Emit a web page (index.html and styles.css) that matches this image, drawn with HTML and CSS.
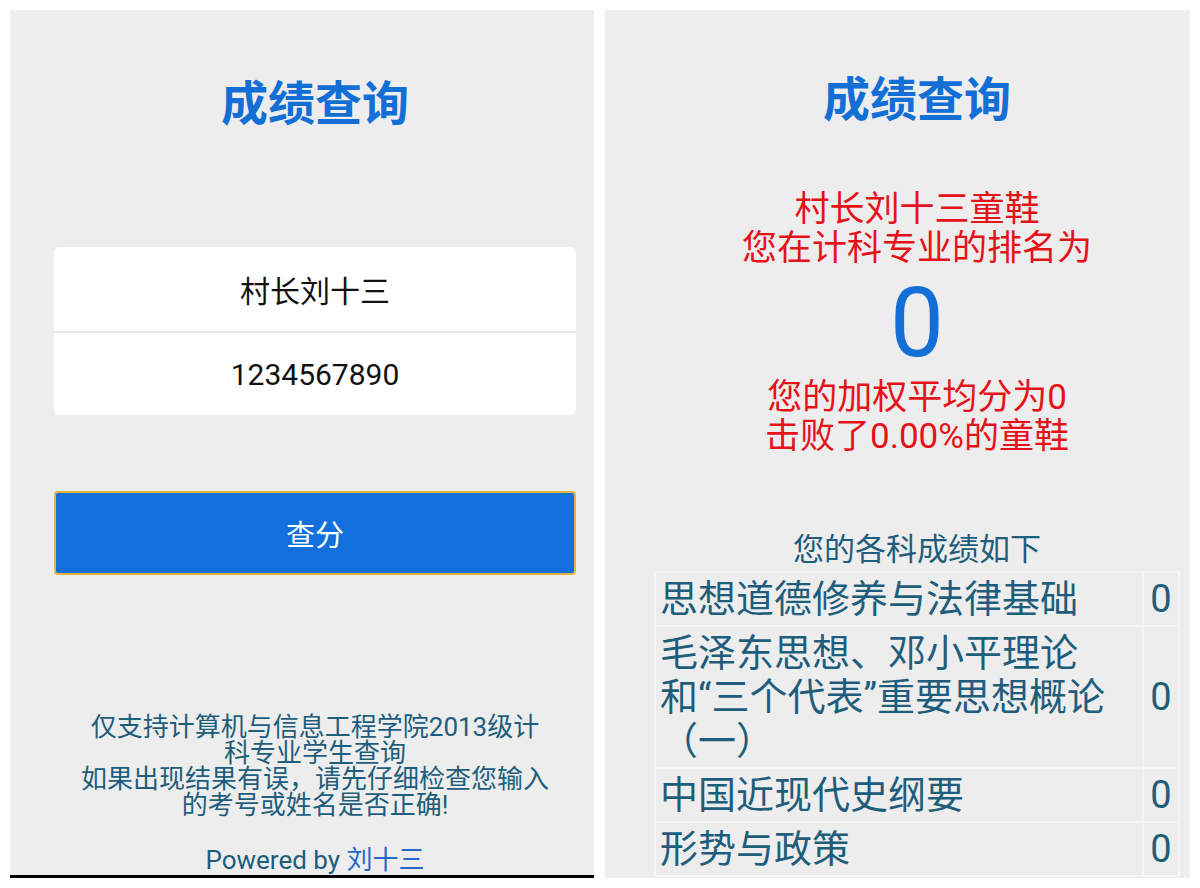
FILE: index.html
```html
<!DOCTYPE html>
<html lang="zh-CN">
<head>
<meta charset="utf-8">
<title>成绩查询</title>
<link rel="stylesheet" href="styles.css">
</head>
<body>
<div class="page">
  <section class="phone phone-login">
    <div class="login">
      <h1 class="title title-login">成绩查询</h1>
      <div class="card">
        <div class="field">村长刘十三</div>
        <div class="field field-next">1234567890</div>
      </div>
      <div class="btn">查分</div>
      <p class="note">仅支持计算机与信息工程学院2013级计<br>科专业学生查询<br>如果出现结果有误，请先仔细检查您输入<br>的考号或姓名是否正确!</p>
      <p class="powered">Powered by <span class="author">刘十三</span></p>
    </div>
    <div class="navbar"></div>
  </section>
  <section class="phone phone-result">
    <div class="result">
      <h1 class="title title-result">成绩查询</h1>
      <p class="red red-top">村长刘十三童鞋<br>您在计科专业的排名为</p>
      <div class="rank">0</div>
      <p class="red red-bottom">您的加权平均分为0<br>击败了0.00%的童鞋</p>
      <p class="subtitle">您的各科成绩如下</p>
      <table class="scores">
        <tr><td class="course">思想道德修养与法律基础</td><td class="score">0</td></tr>
        <tr><td class="course">毛泽东思想、邓小平理论<br>和“三个代表”重要思想概论<br>（一）</td><td class="score">0</td></tr>
        <tr><td class="course">中国近现代史纲要</td><td class="score">0</td></tr>
        <tr><td class="course">形势与政策</td><td class="score">0</td></tr>
      </table>
    </div>
  </section>
</div>
</body>
</html>
```
FILE: styles.css
```css
html, body {
  margin: 0;
  background: #ffffff;
  font-family: Roboto, "Noto Sans CJK SC", sans-serif;
  text-spacing-trim: space-all;
}

.page {
  display: flex;
  gap: 11px;
  padding: 10px;
}

.phone {
  background: #ededed;
  height: 868px;
  overflow: hidden;
  display: flex;
  flex-direction: column;
}

.phone-login { width: 584px; }
.phone-result { width: 585px; }

.login {
  flex: 1;
  padding: 0 18px 0 44px;
}

.title {
  margin: 0;
  font-family: "Noto Sans CJK SC", sans-serif;
  font-size: 47px;
  font-weight: 700;
  line-height: 60px;
  color: #136fd6;
  text-align: center;
}

.title-login { padding-top: 60px; }
.title-result { padding-top: 56px; }

.card {
  margin-top: 117px;
  background: #ffffff;
  border-radius: 6px;
}

.field {
  height: 84px;
  box-sizing: border-box;
  display: flex;
  align-items: center;
  justify-content: center;
  font-size: 30px;
  color: #111111;
}

.field-next { border-top: 2px solid #ebebeb; }

.btn {
  margin-top: 76px;
  height: 84px;
  box-sizing: border-box;
  border: 2px solid #e3b43d;
  border-radius: 4px;
  background: #1170dc;
  color: #ffffff;
  font-size: 29px;
  display: flex;
  align-items: center;
  justify-content: center;
}

.note {
  margin: 139px 0 0;
  font-size: 26px;
  line-height: 26px;
  color: #1e5d7b;
  text-align: center;
  white-space: nowrap;
}

.powered {
  margin: 29px 0 0;
  font-size: 26px;
  line-height: 26px;
  color: #1e5d7b;
  text-align: center;
}

.author { color: #2368c9; }

.navbar {
  height: 3px;
  background: #000000;
}

.result {
  padding: 0 10px 0 49px;
}

.red {
  margin: 0;
  color: #e5121a;
  font-size: 35px;
  line-height: 39px;
  text-align: center;
}

.red-top { margin-top: 64px; }
.red-bottom { margin-top: 5px; }

.rank {
  margin-top: 5px;
  font-family: Roboto, sans-serif;
  font-size: 96px;
  line-height: 100px;
  color: #136fd6;
  text-align: center;
}

.subtitle {
  margin: 78px 0 0;
  font-size: 31px;
  line-height: 31px;
  color: #1e5d7b;
  text-align: center;
}

.scores {
  margin-top: 6px;
  width: 100%;
  border-collapse: collapse;
  font-size: 38px;
  line-height: 44px;
  color: #1e5d7b;
}

.scores td {
  border: 2px solid #f5f5f5;
  padding: 4px 6px 4px 4px;
  vertical-align: middle;
}

.scores .course {
  white-space: nowrap;
}

.scores .score {
  width: 22px;
  padding-left: 6px;
  text-align: center;
}
```
